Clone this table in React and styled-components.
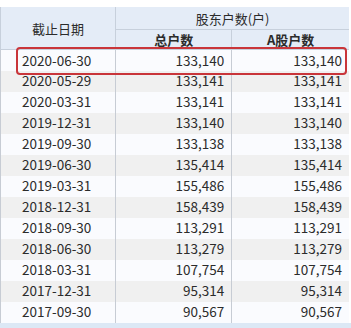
import styled, { createGlobalStyle } from 'styled-components';

const rows = [
  ['2020-06-30', '133,140', '133,140'],
  ['2020-05-29', '133,141', '133,141'],
  ['2020-03-31', '133,141', '133,141'],
  ['2019-12-31', '133,140', '133,140'],
  ['2019-09-30', '133,138', '133,138'],
  ['2019-06-30', '135,414', '135,414'],
  ['2019-03-31', '155,486', '155,486'],
  ['2018-12-31', '158,439', '158,439'],
  ['2018-09-30', '113,291', '113,291'],
  ['2018-06-30', '113,279', '113,279'],
  ['2018-03-31', '107,754', '107,754'],
  ['2017-12-31', '95,314', '95,314'],
  ['2017-09-30', '90,567', '90,567'],
];

const Global = createGlobalStyle`
  body {
    margin: 0;
    background: #fff;
    font-family: "Noto Sans CJK SC", "Open Sans", sans-serif;
  }
`;

function App() {
  return (
    <Page>
      <Global />
      <Wrap>
        <Table>
          <colgroup>
            <col style={{ width: 115 }} />
            <col style={{ width: 116 }} />
            <col style={{ width: 117 }} />
          </colgroup>
          <thead>
            <tr>
              <Th rowSpan={2} $h={22}>截止日期</Th>
              <Th colSpan={2} $h={22}>股东户数(户)</Th>
            </tr>
            <tr>
              <Th $h={19} $bold>总户数</Th>
              <Th $h={19} $bold>A股户数</Th>
            </tr>
          </thead>
          <tbody>
            {rows.map((r, i) => (
              <Row key={r[0]} $odd={i % 2 === 1}>
                <DateCell>{r[0]}</DateCell>
                <Num>{r[1]}</Num>
                <Num>{r[2]}</Num>
              </Row>
            ))}
          </tbody>
        </Table>
        <Highlight />
      </Wrap>
      <Footer />
    </Page>
  );
}

export default App;

const Page = styled.div`
  width: 351px;
  height: 328px;
  overflow: hidden;
  padding-top: 7px;
  box-sizing: border-box;
`;

const Wrap = styled.div`
  position: relative;
  width: 349px;
`;

const Table = styled.table`
  border-collapse: collapse;
  table-layout: fixed;
  width: 349px;
  border-left: 1px solid #c5d3e6;
  color: #2b2b2b;
  font-size: 13.5px;
`;

const Th = styled.th`
  height: ${(p) => p.$h}px;
  padding: 0;
  background: #e4ecf7;
  font-weight: ${(p) => (p.$bold ? 700 : 400)};
  font-size: 13px;
  text-align: center;
  border-left: 1px solid #c7d0dc;
  border-bottom: 1px solid #c7d0dc;
  line-height: 1;
`;

const Row = styled.tr`
  height: 21px;
  background: ${(p) => (p.$odd ? '#f0f0f0' : '#fafbfe')};
`;

const DateCell = styled.td`
  padding: 0 0 0 21px;
  border-left: 1px solid #c7ccd4;
  line-height: 1;
`;

const Num = styled.td`
  padding: 0 7px 0 0;
  text-align: right;
  border-left: 1px solid #c7ccd4;
  line-height: 1;
`;

const Highlight = styled.div`
  position: absolute;
  left: 16px;
  top: 40px;
  width: 331px;
  height: 28px;
  border: 2.5px solid #c9353a;
  border-radius: 4px;
  box-sizing: border-box;
  pointer-events: none;
`;

const Footer = styled.div`
  height: 8px;
  background: #dce8f5;
`;
